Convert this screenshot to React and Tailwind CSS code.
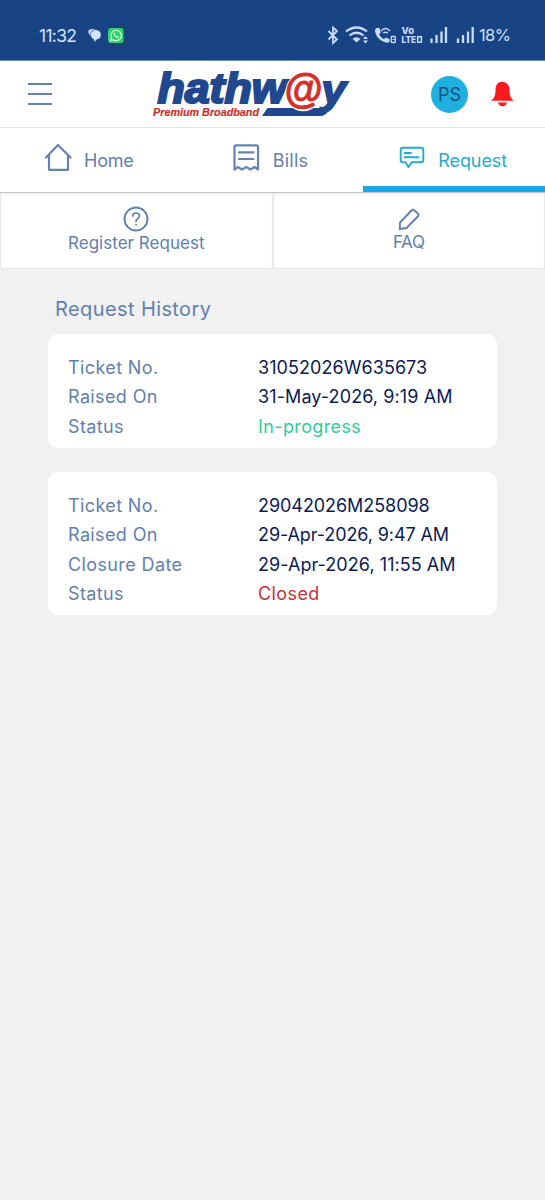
import React from 'react';

const tickets = [
  {
    id: 1,
    height: 'h-[114px]',
    rows: [
      { label: 'Ticket No.', value: '31052026W635673', color: 'text-[#0b1b55]', spacing: 'tracking-[0.06px]' },
      { label: 'Raised On', value: '31-May-2026, 9:19 AM', color: 'text-[#0b1b55]', spacing: 'tracking-[0.1px]' },
      { label: 'Status', value: 'In-progress', color: 'text-[#32cb9b]', spacing: 'tracking-[0.38px]' },
    ],
  },
  {
    id: 2,
    height: 'h-[143px]',
    rows: [
      { label: 'Ticket No.', value: '29042026M258098', color: 'text-[#0b1b55]', spacing: 'tracking-[-0.06px]' },
      { label: 'Raised On', value: '29-Apr-2026, 9:47 AM', color: 'text-[#0b1b55]', spacing: 'tracking-[-0.1px]' },
      { label: 'Closure Date', value: '29-Apr-2026, 11:55 AM', color: 'text-[#0b1b55]', spacing: 'tracking-[0.05px]' },
      { label: 'Status', value: 'Closed', color: 'text-[#c73137]', spacing: 'tracking-[0.4px]' },
    ],
  },
];

const StatusIcons = () => (
  <svg width="150" height="24" viewBox="325 23 150 24" fill="none" stroke="#c9dcfb" className="ml-[200px] shrink-0 overflow-visible">
    {/* bluetooth */}
    <path d="M328.5 31 L337 39.5 L333 43 V27.5 L337 31 L328.5 39.5" strokeWidth="1.8" />
    {/* wifi */}
    <path d="M346 31.5 Q356.500 23.500 367 31.500" strokeWidth="2.200" />
    <path d="M349.500 35.500 Q356.500 30 363.500 35.500" strokeWidth="2.200" />
    <path d="M352.500 38.800 Q356.500 35.600 360.500 38.800 L356.500 42.500 Z" fill="#c9dcfb" stroke="none" />
    <path d="M363 39 L365.500 36 L368 39 Z M363 40.500 L365.500 43.500 L368 40.500 Z" fill="#c9dcfb" stroke="none" />
    {/* wifi calling */}
    <path d="M376.500 28 L379.500 28 L380.700 32.500 L379 34.500 Q381 38 384 39.300 L385.800 37.500 L389.500 39 L389.500 42 Q387 43.500 383 41.500 Q376 38 375 31 Q375 28.500 376.500 28 Z" fill="#c9dcfb" stroke="none" />
    <path d="M381 31 Q385.500 26 390 31 M383.300 33.300 Q385.500 31.300 387.800 33.300" strokeWidth="1.300" />
    <rect x="391.300" y="36.500" width="4" height="6" rx="0.500" strokeWidth="1.300" />
    <path d="M392.500 39.500 H395" />
    {/* volte */}
    <text x="401.500" y="34.300" fontFamily="Inter, sans-serif" fontWeight="800" fontSize="9.500" textLength="12.500" lengthAdjust="spacingAndGlyphs" fill="#c9dcfb" stroke="none">Vo</text>
    <text x="401.500" y="42.900" fontFamily="Inter, sans-serif" fontWeight="800" fontSize="9.500" textLength="14.500" lengthAdjust="spacingAndGlyphs" fill="#c9dcfb" stroke="none">LTE</text>
    <rect x="417.700" y="36.700" width="3.700" height="5.500" strokeWidth="1.500" />
    {/* signal bars */}
    <path d="M431.500 38.500 V43 M436.500 35 V43 M441.500 31.500 V43 M446 27 V43" strokeWidth="2.300" />
    <path d="M458 38.500 V43 M463 35 V43 M468 31.500 V43 M472.700 27 V43" strokeWidth="2.300" />
  </svg>
);

const Logo = () => (
  <svg width="200" height="52" viewBox="150 68 200 52" className="ml-[98px] shrink-0 overflow-visible">
    <g fontFamily="'Liberation Sans', sans-serif" fontStyle="italic" fontWeight="700">
      <text x="157.500" y="103.300" textLength="129" lengthAdjust="spacingAndGlyphs" fontSize="42" fill="#21488f" stroke="#21488f" strokeWidth="2.200">hathw</text>
      <text x="321.500" y="103.500" textLength="24.500" lengthAdjust="spacingAndGlyphs" fontSize="41" fill="#21488f" stroke="#21488f" strokeWidth="2">y</text>
      {/* bar under the name, runs into the tail of the y */}
      <path d="M267.500 108 H320 L332 104 L328.500 110.500 Q325.500 116 320 116 H262 Z" fill="#21488f" />
      <ellipse cx="304" cy="91.500" rx="18.500" ry="20" fill="#fff" transform="rotate(20 304 91.500)" />
      <text x="284" y="103" textLength="38" lengthAdjust="spacingAndGlyphs" fontSize="41" fill="#d4302b" stroke="#d4302b" strokeWidth="0.900">@</text>
      <text x="153" y="115.500" textLength="106" lengthAdjust="spacingAndGlyphs" fontSize="11.500" fill="#cb3027" stroke="#cb3027" strokeWidth="0.200">Premium Broadband</text>
    </g>
  </svg>
);

const HomeIcon = () => (
  <svg width="28" height="30" viewBox="44 143 28 30" fill="none" stroke="#6583b2" strokeWidth="2.200" strokeLinejoin="round" strokeLinecap="round">
    <path d="M46 157.500 L58 145 L70.500 157.500 M49 155 V169.800 H68 V155" />
  </svg>
);

const BillIcon = () => (
  <svg width="28" height="30" viewBox="232 143 28 30" fill="none" stroke="#6583b2" strokeWidth="2.200" strokeLinejoin="round" strokeLinecap="round">
    <path d="M234.500 169.500 V147 Q234.500 145.300 236 145.300 H256.300 Q258 145.300 258 147 V169.500 L254.500 167 L250.500 169.500 L246.300 167 L242 169.500 L238 167 Z M239 152.300 H253.500 M239 159 H253.500" />
  </svg>
);

const ChatIcon = () => (
  <svg width="28" height="30" viewBox="398 143 28 30" fill="none" stroke="#25abd1" strokeWidth="1.900" strokeLinejoin="round" strokeLinecap="round">
    <path d="M403 147.800 H421 Q423.300 147.800 423.300 150 V160 Q423.300 162.300 421 162.300 H411.500 L408.500 167.300 L405.500 162.300 H403 Q400.700 162.300 400.700 160 V150 Q400.700 147.800 403 147.800 Z M404.500 153 H411 M404.500 157.300 H418.500" />
  </svg>
);

const App = () => {
  return (
    <div className="min-h-[1200px] w-[545px] bg-[#f1f1f1] font-[Inter,sans-serif] text-[#6280af]">
      <div className="flex h-[61px] items-center border-b border-[#6d8bb9] bg-[#184486] pt-[10px] text-[#d2e1fc]">
        <span className="ml-[39px] w-[47px] pt-px text-[17.5px] leading-6 tracking-[-0.7px] whitespace-nowrap">11:32</span>
        <svg width="38" height="20" viewBox="87 25 38 20" className="ml-[1px] shrink-0">
          <path d="M89 34 Q86.500 29 93 29 H96 Q89 30.500 90.500 36 Z" fill="#d2e1fc" />
          <path d="M95.500 30 C102.500 29.500 102.500 39.300 96.500 39.500 L94.500 42 L94 39.200 C89.500 38 89.500 30.500 95.500 30 Z" fill="#d2e1fc" />
          <rect x="108" y="28" width="15.500" height="15" rx="3" fill="#2bd566" />
          <path d="M110.500 40.500 L111.500 37.700 A5.200 5.200 0 1 1 113.200 39.700 Z" fill="none" stroke="#e9fff1" strokeWidth="1.200" />
          <path d="M113.700 32.700 Q113.500 37.300 118.200 38 L118.800 36.700 L117.200 35.900 L116.500 36.500 Q115.200 35.900 114.900 34.800 L115.400 34 L114.700 32.700 Z" fill="#e9fff1" />
        </svg>
        <StatusIcons />
        <span className="ml-[4px] text-[16.5px] leading-6 tracking-[-0.6px]">18%</span>
      </div>

      <header className="flex h-[67px] items-center border-b border-[#e3e7f1] bg-white">
        <div className="ml-[28px] flex w-6 flex-col gap-2">
          <div className="h-[2px] bg-[#6280af]" />
          <div className="h-[2px] bg-[#6280af]" />
          <div className="h-[2px] bg-[#6280af]" />
        </div>
        <Logo />
        <div className="ml-[81px] flex h-[37px] w-[37px] shrink-0 items-center justify-center rounded-full bg-[#20b0df] pt-px text-[18px] text-[#14507b]">PS</div>
        <svg width="26" height="28" viewBox="489 80 26 28" className="ml-[21px] shrink-0" fill="#fb1b1c">
          <path d="M502 81.700 C507 81.700 509.500 85.500 509.500 90 C509.500 96 511 98.500 514 100.800 H491 C494 98.500 495.500 96 495.500 90 C495.500 85.500 497.500 81.700 502 81.700 Z" />
          <path d="M498 102.500 H507 Q506 106.300 502.500 106.300 Q499 106.300 498 102.500 Z" />
        </svg>
      </header>

      <nav className="grid h-[64px] grid-cols-3 bg-white text-[18px]">
        <div className="flex items-center pl-[44px]">
          <div className="pb-[4px]"><HomeIcon /></div>
          <span className="ml-[12px] tracking-[-0.2px]">Home</span>
        </div>
        <div className="flex items-center pl-[50px]">
          <div className="pb-[4px]"><BillIcon /></div>
          <span className="ml-[13px] tracking-[0.25px]">Bills</span>
        </div>
        <div className="flex items-center border-b-[6px] border-[#1ca7e0] pl-[35px] text-[#25abd1]">
          <div className="pt-[2px]"><ChatIcon /></div>
          <span className="ml-[12px] pt-[6px] tracking-[-0.1px]">Request</span>
        </div>
      </nav>

      <div className="grid h-[77px] grid-cols-2 gap-[2px] border-t border-[#c4c4c8] bg-[#e9e9ec] px-px pb-px text-[17px] leading-5">
        <div className="flex flex-col items-center rounded-[3px] bg-white pt-[13px] shadow-[inset_0_3px_3px_-1px_#f1f1f1]">
          <svg width="26" height="26" viewBox="0 0 26 26" fill="none" stroke="#6280af" strokeLinecap="round">
            <circle cx="13" cy="13" r="11.500" strokeWidth="1.900" />
            <path d="M9.700 10 C9.700 6 16.500 6 16.500 10 C16.500 12.500 13 12.500 13 15.500" strokeWidth="1.700" />
            <circle cx="13" cy="18.700" r="0.600" fill="#6280af" strokeWidth="0.800" />
          </svg>
          <span className="mt-px tracking-[0.02px]">Register Request</span>
        </div>
        <div className="flex flex-col items-center rounded-[3px] bg-white pt-[13px] shadow-[inset_0_3px_3px_-1px_#f1f1f1]">
          <svg width="24" height="26" viewBox="397 206 24 26" fill="none" stroke="#6280af" strokeWidth="1.900" strokeLinejoin="round">
            <path d="M399.800 229 L400 222.500 L411.500 210.500 Q413 209 414.500 210.500 L417.800 213.500 Q419.300 215 417.800 216.500 L406.500 228 Z" />
          </svg>
          <span className="tracking-[-0.3px]">FAQ</span>
        </div>
      </div>

      <main className="px-12">
        <h2 className="ml-[7px] pt-[26px] text-[20px] leading-7 tracking-[0.4px]">Request History</h2>
        <div className="mt-[11px] flex flex-col gap-6">
          {tickets.map(ticket => (
            <div key={ticket.id} className={`${ticket.height} w-[449px] rounded-[10px] bg-white pt-[18.6px] pl-5 text-[18px] leading-[29.5px]`}>
              {ticket.rows.map(row => (
                <div key={row.label} className="flex whitespace-nowrap">
                  <span className="w-[190px] tracking-[0.38px]">{row.label}</span>
                  <span className={`${row.color} ${row.spacing}`}>{row.value}</span>
                </div>
              ))}
            </div>
          ))}
        </div>
      </main>
    </div>
  );
};

export default App;
